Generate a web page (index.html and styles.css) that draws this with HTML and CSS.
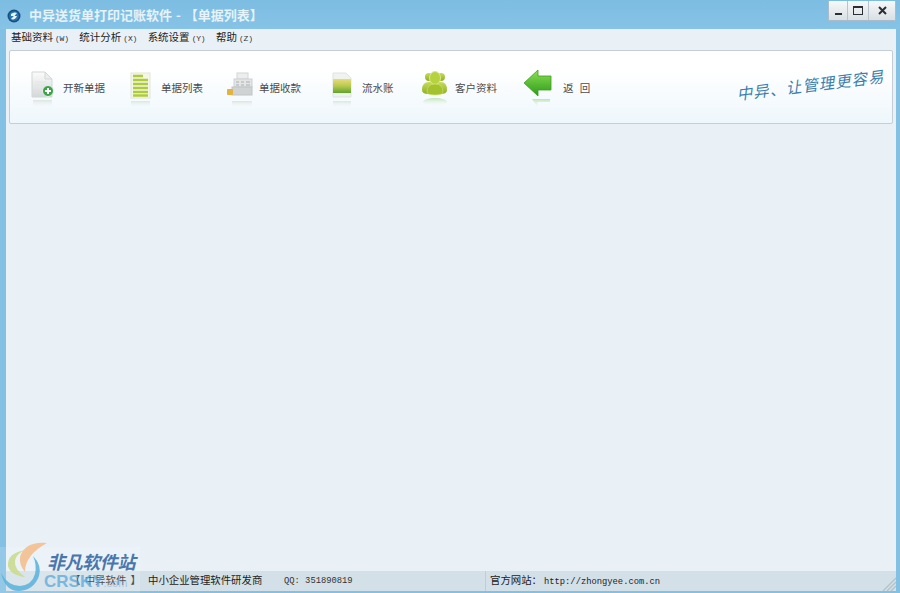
FILE: index.html
```html
<!DOCTYPE html>
<html lang="zh-CN">
<head>
    <meta charset="UTF-8">
    <title>中异送货单打印记账软件</title>
    <link rel="stylesheet" href="styles.css">
</head>
<body>
<div class="window">

    <!-- title bar -->
    <div class="titlebar">
        <svg class="app-icon" width="14" height="14" viewBox="0 0 14 14">
            <circle cx="7" cy="7" r="6.5" fill="#174f82"/>
            <circle cx="7" cy="7" r="4.8" fill="#2a79ad"/>
            <path d="M4 5 Q7 2.5 10 4 L7.5 7 L10 7 Q8 11.5 4 10 L6.8 7 L4 7 Z" fill="#e6f4fb"/>
        </svg>
        <span class="title">中异送货单打印记账软件 - 【单据列表】</span>
        <div class="win-buttons">
            <div class="win-btn btn-min"><span class="min-glyph"></span></div>
            <div class="win-btn btn-max"><span class="max-glyph"></span></div>
            <div class="win-btn btn-close">
                <svg width="9" height="9" viewBox="0 0 9 9"><path d="M1 1 L8 8 M8 1 L1 8" stroke="#2a2f33" stroke-width="2"/></svg>
            </div>
        </div>
    </div>

    <div class="content">
        <!-- menu -->
        <div class="menubar">
            <span class="menu-item">基础资料<span class="key">(W)</span></span>
            <span class="menu-item">统计分析<span class="key">(X)</span></span>
            <span class="menu-item">系统设置<span class="key">(Y)</span></span>
            <span class="menu-item">帮助<span class="key">(Z)</span></span>
        </div>

        <!-- toolbar -->
        <div class="toolbar">
            <div class="tool">
                <svg class="tool-icon" width="33" height="44" viewBox="0 0 33 44">
                    <defs>
                        <linearGradient id="paper" x1="0" y1="0" x2="0" y2="1">
                            <stop offset="0" stop-color="#fbfbfb"/><stop offset="1" stop-color="#d5d8d8"/>
                        </linearGradient>
                        <linearGradient id="fade" x1="0" y1="0" x2="0" y2="1">
                            <stop offset="0" stop-color="#c3cfc3" stop-opacity=".5"/><stop offset="1" stop-color="#fff" stop-opacity="0"/>
                        </linearGradient>
                        <linearGradient id="fadegreen" x1="0" y1="0" x2="0" y2="1">
                            <stop offset="0" stop-color="#8fcf7a" stop-opacity=".55"/><stop offset="1" stop-color="#fff" stop-opacity="0"/>
                        </linearGradient>
                        <linearGradient id="arrow" x1="0" y1="0" x2="0" y2="1">
                            <stop offset="0" stop-color="#8ce052"/><stop offset="1" stop-color="#2c9a1a"/>
                        </linearGradient>
                        <linearGradient id="person" x1="0" y1="0" x2="0" y2="1">
                            <stop offset="0" stop-color="#c7dc5c"/><stop offset="1" stop-color="#8fb024"/>
                        </linearGradient>
                        <linearGradient id="ledger" x1="0" y1="0" x2="0" y2="1">
                            <stop offset="0" stop-color="#eadb7a"/><stop offset=".5" stop-color="#b9c94f"/><stop offset="1" stop-color="#5fa32f"/>
                        </linearGradient>
                    </defs>
                    <path d="M2 4 H15 L22 11 V29 H2 Z" fill="url(#paper)" stroke="#d3d7d7"/>
                    <path d="M15 4 V11 H22 Z" fill="#eceeee" stroke="#d3d7d7"/>
                    <path d="M5 14 H16 M5 17 H16 M5 20 H12" stroke="#e4e6e6"/>
                    <circle cx="18" cy="23" r="5.5" fill="#3da24a" stroke="#e8f3e8"/>
                    <path d="M15 23 H21 M18 20 V26" stroke="#fff" stroke-width="2"/>
                    <rect x="3" y="32" width="19" height="8" fill="url(#fade)"/>
                </svg>
                <span class="tool-label">开新单据</span>
            </div>
            <div class="tool">
                <svg class="tool-icon" width="33" height="44" viewBox="0 0 33 44">
                    <rect x="3" y="5" width="19" height="25" fill="#f4f6ea" stroke="#e3e6d6"/>
                    <path d="M5 8 H15 M5 12 H20 M5 16 H20 M5 20 H20 M5 24 H20 M5 27.5 H20" stroke="#aecb3a" stroke-width="2.4"/>
                    <rect x="3" y="33" width="19" height="7" fill="url(#fade)"/>
                </svg>
                <span class="tool-label">单据列表</span>
            </div>
            <div class="tool">
                <svg class="tool-icon" width="33" height="44" viewBox="0 0 33 44">
                    <rect x="11" y="5" width="11" height="6" fill="#eceeee" stroke="#d2d6d6"/>
                    <rect x="8" y="11" width="18" height="8" fill="#e4e6e6" stroke="#cdd1d1"/>
                    <path d="M10 14 H13 M15 14 H18 M20 14 H24 M10 17 H13 M15 17 H18 M20 17 H24" stroke="#a8aeae"/>
                    <rect x="6" y="19" width="20" height="8" fill="#cfd3d3" stroke="#c0c4c4"/>
                    <rect x="1" y="21" width="6" height="6" rx="1" fill="#e6b23c"/>
                    <rect x="6" y="33" width="20" height="7" fill="url(#fade)"/>
                </svg>
                <span class="tool-label">单据收款</span>
            </div>
            <div class="tool">
                <svg class="tool-icon" width="38" height="44" viewBox="0 0 38 44">
                    <path d="M9 5 H22 L27 10 V29 H9 Z" fill="#f0f2f0" stroke="#e0e3e1"/>
                    <rect x="9" y="11" width="18" height="14" fill="url(#ledger)"/>
                    <rect x="9" y="33" width="18" height="7" fill="url(#fade)"/>
                </svg>
                <span class="tool-label">流水账</span>
            </div>
            <div class="tool">
                <svg class="tool-icon" width="33" height="44" viewBox="0 0 33 44">
                    <circle cx="7" cy="9" r="4" fill="url(#person)"/>
                    <circle cx="19" cy="9" r="4" fill="url(#person)"/>
                    <path d="M0 22 Q0 14 7 14 H19 Q25 14 25 22 Q25 26 19 26 H6 Q0 26 0 22 Z" fill="url(#person)"/>
                    <ellipse cx="13" cy="10" rx="5.5" ry="6.5" fill="#b7d23f" stroke="#dbe892"/>
                    <path d="M5 24 Q5 16 13 16 Q21 16 21 24 Q21 27 13 27 Q5 27 5 24 Z" fill="#a3c22c" stroke="#d3e380" stroke-width=".6"/>
                    <ellipse cx="13" cy="34" rx="12" ry="4" fill="url(#fadegreen)"/>
                </svg>
                <span class="tool-label">客户资料</span>
            </div>
            <div class="tool">
                <svg class="tool-icon" width="43" height="44" viewBox="0 0 43 44">
                    <path d="M4 15 L18 2 V8 H31 V22 H18 V28 Z" fill="url(#arrow)" stroke="#3a9f22" stroke-width=".8" stroke-linejoin="round"/>
                    <path d="M12 31 L18 40 V34 H30 V31 Z" fill="url(#fadegreen)"/>
                </svg>
                <span class="tool-label tool-back">返 回</span>
            </div>
            <span class="slogan">中异、让管理更容易</span>
        </div>

        <div class="workspace"></div>

        <!-- status bar -->
        <div class="statusbar">
            <span class="status-brand">【 中异软件 】</span>
            <span class="status-desc">中小企业管理软件研发商</span>
            <span class="status-qq">QQ: 351890819</span>
            <span class="status-site">官方网站：<span class="mono">http://zhongyee.com.cn</span></span>
            <svg class="grip" width="14" height="14" viewBox="0 0 14 14">
                <path d="M1 14 L14 1 M5 14 L14 5 M9 14 L14 9" stroke="#b3c2cb" stroke-width="1.4"/>
            </svg>
        </div>
    </div>

    <!-- site watermark over the corner -->
    <div class="watermark">
        <svg class="wm-logo" width="62" height="54" viewBox="0 0 62 54">
            <path d="M24 11 Q6 14 7 27 Q9 36 24 38 Q13 30 14 22 Q15 15 24 11 Z" fill="#c9dc8e" opacity=".9"/>
            <path d="M46 4 Q24 2 19 18 Q18 26 24 33 Q24 16 46 4 Z" fill="#f3c193" opacity=".95"/>
            <path d="M32 17 Q41 26 38 37 Q33 51 18 52 Q4 52 0 34 Q7 47 19 47 Q31 46 34 35 Q36 26 32 17 Z" fill="#5fb4dc" opacity=".9"/>
        </svg>
        <span class="wm-name">非凡软件站</span>
        <span class="wm-sub">CRSKY<span class="wm-com">.com</span></span>
    </div>
</div>
</body>
</html>
```

FILE: styles.css
```css
html, body {
    margin: 0;
    padding: 0;
}
body {
    font-family: "Noto Sans CJK SC", sans-serif;
    background-color: #82c0e4;
}
.window {
    position: relative;
    width: 900px;
    height: 593px;
    overflow: hidden;
    display: flex;
    flex-direction: column;
    background-color: #82c0e4;
}

/* title bar */
.titlebar {
    height: 29px;
    flex: none;
    display: flex;
    align-items: center;
    padding-left: 7px;
    background: linear-gradient(#7dbde2, #86c3e6);
}
.app-icon {
    margin: 2px 8px 0 0;
}
.title {
    color: #eef8fc;
    font-size: 13px;
    font-weight: 700;
    opacity: .92;
    word-spacing: 1px;
}
.win-buttons {
    display: flex;
    margin-left: auto;
    margin-right: 4px;
    align-self: flex-start;
    margin-top: 1px;
    height: 19px;
    border: 1px solid #a9bcc8;
    border-top: 0;
}
.win-btn {
    display: flex;
    align-items: center;
    justify-content: center;
    background: linear-gradient(#f7f9fa, #d9dfe3);
    border-left: 1px solid #b7c4cd;
    height: 19px;
}
.btn-min {
    width: 18px;
    border-left: 0;
}
.btn-max {
    width: 20px;
}
.btn-close {
    width: 26px;
}
.min-glyph {
    width: 7px;
    height: 2px;
    margin-top: 7px;
    background-color: #2a2f33;
}
.max-glyph {
    width: 8px;
    height: 6px;
    border: 1px solid #2a2f33;
    border-top-width: 2px;
}

/* content */
.content {
    flex: 1;
    margin: 0 4px 2px 6px;
    display: flex;
    flex-direction: column;
    background-color: #e9f1f7;
}
.menubar {
    height: 21px;
    flex: none;
    display: flex;
    align-items: center;
    padding: 0 0 3px 5px;
    box-sizing: border-box;
    gap: 10.5px;
    background-color: #e9f1f7;
}
.menu-item {
    color: #222;
    font-size: 10.5px;
    line-height: 14px;
}
.key {
    font-family: "Liberation Mono", monospace;
    font-size: 8px;
    margin-left: 2px;
    color: #333;
    letter-spacing: -.2px;
}

/* toolbar */
.toolbar {
    position: relative;
    height: 74px;
    flex: none;
    margin: 0 3px;
    box-sizing: border-box;
    display: flex;
    align-items: center;
    padding-left: 20px;
    border: 1px solid #c3ced6;
    border-radius: 2px;
    background: linear-gradient(#ffffff 25%, #eef7fc);
}
.tool {
    width: 98px;
    flex: none;
    display: flex;
    align-items: center;
}
.tool-icon {
    flex: none;
    margin-top: 6px;
}
.tool-label {
    color: #4c4c4c;
    font-size: 10.5px;
    white-space: nowrap;
}
.tool-back {
    word-spacing: 4px;
}
.slogan {
    position: absolute;
    right: 7px;
    top: 22px;
    color: #3a7fae;
    font-size: 15.5px;
    font-style: italic;
    letter-spacing: 1px;
    transform: rotate(-7deg);
}
.workspace {
    flex: 1;
}

/* status bar */
.statusbar {
    position: relative;
    height: 20px;
    flex: none;
    display: flex;
    align-items: center;
    background-color: #d3e0e8;
    color: #333;
    font-size: 10.4px;
}
.status-brand {
    width: 78px;
    margin: 0 0 4px 64px;
    flex: none;
    white-space: nowrap;
    word-spacing: 2px;
}
.status-desc {
    width: 135px;
    margin-bottom: 4px;
    flex: none;
    color: #222;
}
.status-qq {
    width: 203px;
    flex: none;
    height: 20px;
    line-height: 20px;
    box-sizing: border-box;
    padding-left: 1px;
    border-right: 1px solid #bfcdd6;
    font-family: "Liberation Mono", monospace;
    font-size: 8.8px;
}
.status-site {
    margin: 0 0 4px 4px;
    color: #222;
}
.mono {
    font-family: "Liberation Mono", monospace;
    font-size: 8.8px;
    margin-left: 2px;
}
.grip {
    position: absolute;
    right: 0;
    bottom: 0;
}

/* watermark */
.watermark {
    position: absolute;
    left: 0;
    bottom: 0;
    width: 140px;
    height: 46px;
    background: rgba(255, 255, 255, .14);
}
.wm-logo {
    position: absolute;
    left: 1px;
    bottom: 0;
}
.wm-name {
    position: absolute;
    left: 47px;
    top: 2px;
    color: #4a76ae;
    font-size: 18px;
    font-weight: 700;
    font-style: italic;
    line-height: 24px;
    white-space: nowrap;
    letter-spacing: -.4px;
}
.wm-sub {
    position: absolute;
    left: 44px;
    top: 25px;
    color: #5aa9dc;
    font-family: "Liberation Sans", sans-serif;
    font-size: 17px;
    font-weight: 700;
    line-height: 20px;
    white-space: nowrap;
    opacity: .75;
}
.wm-com {
    font-size: 11px;
    font-weight: 400;
    opacity: .6;
}
```
